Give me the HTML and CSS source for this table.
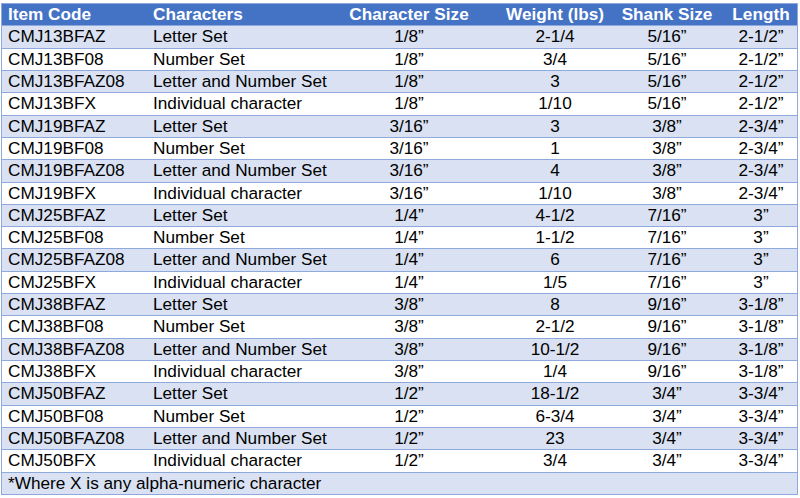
FILE: index.html
```html
<!DOCTYPE html>
<html>
<head>
<meta charset="utf-8">
<link rel="stylesheet" href="styles.css">
</head>
<body>
<div class="table">
  <div class="row head">
    <div class="c l1">Item Code</div><div class="c l2">Characters</div><div class="c m">Character Size</div><div class="c m">Weight (lbs)</div><div class="c m">Shank Size</div><div class="c m">Length</div>
  </div>
  <div class="row alt"><div class="c l1">CMJ13BFAZ</div><div class="c l2">Letter Set</div><div class="c m">1/8”</div><div class="c m">2-1/4</div><div class="c m">5/16”</div><div class="c m">2-1/2”</div></div>
  <div class="row"><div class="c l1">CMJ13BF08</div><div class="c l2">Number Set</div><div class="c m">1/8”</div><div class="c m">3/4</div><div class="c m">5/16”</div><div class="c m">2-1/2”</div></div>
  <div class="row alt"><div class="c l1">CMJ13BFAZ08</div><div class="c l2">Letter and Number Set</div><div class="c m">1/8”</div><div class="c m">3</div><div class="c m">5/16”</div><div class="c m">2-1/2”</div></div>
  <div class="row"><div class="c l1">CMJ13BFX</div><div class="c l2">Individual character</div><div class="c m">1/8”</div><div class="c m">1/10</div><div class="c m">5/16”</div><div class="c m">2-1/2”</div></div>
  <div class="row alt"><div class="c l1">CMJ19BFAZ</div><div class="c l2">Letter Set</div><div class="c m">3/16”</div><div class="c m">3</div><div class="c m">3/8”</div><div class="c m">2-3/4”</div></div>
  <div class="row"><div class="c l1">CMJ19BF08</div><div class="c l2">Number Set</div><div class="c m">3/16”</div><div class="c m">1</div><div class="c m">3/8”</div><div class="c m">2-3/4”</div></div>
  <div class="row alt"><div class="c l1">CMJ19BFAZ08</div><div class="c l2">Letter and Number Set</div><div class="c m">3/16”</div><div class="c m">4</div><div class="c m">3/8”</div><div class="c m">2-3/4”</div></div>
  <div class="row"><div class="c l1">CMJ19BFX</div><div class="c l2">Individual character</div><div class="c m">3/16”</div><div class="c m">1/10</div><div class="c m">3/8”</div><div class="c m">2-3/4”</div></div>
  <div class="row alt"><div class="c l1">CMJ25BFAZ</div><div class="c l2">Letter Set</div><div class="c m">1/4”</div><div class="c m">4-1/2</div><div class="c m">7/16”</div><div class="c m">3”</div></div>
  <div class="row"><div class="c l1">CMJ25BF08</div><div class="c l2">Number Set</div><div class="c m">1/4”</div><div class="c m">1-1/2</div><div class="c m">7/16”</div><div class="c m">3”</div></div>
  <div class="row alt"><div class="c l1">CMJ25BFAZ08</div><div class="c l2">Letter and Number Set</div><div class="c m">1/4”</div><div class="c m">6</div><div class="c m">7/16”</div><div class="c m">3”</div></div>
  <div class="row"><div class="c l1">CMJ25BFX</div><div class="c l2">Individual character</div><div class="c m">1/4”</div><div class="c m">1/5</div><div class="c m">7/16”</div><div class="c m">3”</div></div>
  <div class="row alt"><div class="c l1">CMJ38BFAZ</div><div class="c l2">Letter Set</div><div class="c m">3/8”</div><div class="c m">8</div><div class="c m">9/16”</div><div class="c m">3-1/8”</div></div>
  <div class="row"><div class="c l1">CMJ38BF08</div><div class="c l2">Number Set</div><div class="c m">3/8”</div><div class="c m">2-1/2</div><div class="c m">9/16”</div><div class="c m">3-1/8”</div></div>
  <div class="row alt"><div class="c l1">CMJ38BFAZ08</div><div class="c l2">Letter and Number Set</div><div class="c m">3/8”</div><div class="c m">10-1/2</div><div class="c m">9/16”</div><div class="c m">3-1/8”</div></div>
  <div class="row"><div class="c l1">CMJ38BFX</div><div class="c l2">Individual character</div><div class="c m">3/8”</div><div class="c m">1/4</div><div class="c m">9/16”</div><div class="c m">3-1/8”</div></div>
  <div class="row alt"><div class="c l1">CMJ50BFAZ</div><div class="c l2">Letter Set</div><div class="c m">1/2”</div><div class="c m">18-1/2</div><div class="c m">3/4”</div><div class="c m">3-3/4”</div></div>
  <div class="row"><div class="c l1">CMJ50BF08</div><div class="c l2">Number Set</div><div class="c m">1/2”</div><div class="c m">6-3/4</div><div class="c m">3/4”</div><div class="c m">3-3/4”</div></div>
  <div class="row alt"><div class="c l1">CMJ50BFAZ08</div><div class="c l2">Letter and Number Set</div><div class="c m">1/2”</div><div class="c m">23</div><div class="c m">3/4”</div><div class="c m">3-3/4”</div></div>
  <div class="row"><div class="c l1">CMJ50BFX</div><div class="c l2">Individual character</div><div class="c m">1/2”</div><div class="c m">3/4</div><div class="c m">3/4”</div><div class="c m">3-3/4”</div></div>
  <div class="row alt foot"><div class="c l1">*Where X is any alpha-numeric character</div></div>
</div>
</body>
</html>
```
FILE: styles.css
```css
html, body {
  margin: 0;
  padding: 0;
  background: #ffffff;
}
body {
  font-family: "Liberation Sans", Arial, sans-serif;
  font-size: 17.2px;
  color: #000000;
}
.table {
  margin: 3px 0 0 1px;
  width: 797px;
  height: 492px;
  box-sizing: border-box;
  border: 1px solid #8ea9db;
  display: flex;
  flex-direction: column;
}
.row {
  flex: 1 1 0;
  display: grid;
  grid-template-columns: 146px 169px 184px 108px 116px 1fr;
  border-top: 1px solid #8ea9db;
  background: #ffffff;
  min-height: 0;
}
.row.head {
  border-top: none;
  background: #4472c4;
  color: #ffffff;
  font-weight: bold;
}
.row.alt {
  background: #d9e1f2;
}
.c {
  display: flex;
  align-items: center;
  white-space: nowrap;
  line-height: 1;
}
.l1 {
  padding-left: 6px;
}
.l2 {
  padding-left: 5px;
}
.m {
  justify-content: center;
}
.foot {
  display: flex;
}
```
